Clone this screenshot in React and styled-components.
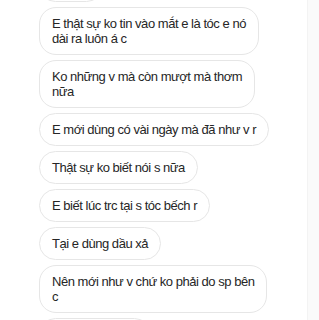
import styled, { createGlobalStyle } from "styled-components";

const GlobalStyle = createGlobalStyle`
  html, body {
    margin: 0;
    padding: 0;
    background: #ffffff;
  }
  body {
    font-family: "Liberation Sans", Arial, sans-serif;
    overflow: hidden;
  }
`;

const Page = styled.div`
  display: grid;
  grid-template-columns: 1fr 12px;
  height: 320px;
  overflow: hidden;
`;

const Thread = styled.div`
  display: flex;
  flex-direction: column;
  align-items: flex-start;
  gap: 5px;
  padding-left: 39px;
  /* the first bubble is scrolled mostly out of view */
  margin-top: -31px;
`;

const Bubble = styled.div`
  box-sizing: border-box;
  padding: 8px 12px;
  border: 1px solid #e6e6e6;
  border-radius: 17px;
  background: #ffffff;
  color: #262626;
  font-size: 13px;
  line-height: 15px;
  letter-spacing: -0.47px;
  white-space: pre-line;
`;

const ScrollStrip = styled.div`
  background: #fafafa;
  border-left: 1px solid #f3f3f3;
`;

const messages = [
  "Dạ c ơi",
  "E thật sự ko tin vào mắt e là tóc e nó\ndài ra luôn á c",
  "Ko những v mà còn mượt mà thơm\nnữa",
  "E mới dùng có vài ngày mà đã như v r",
  "Thật sự ko biết nói s nữa",
  "E biết lúc trc tại s tóc bếch r",
  "Tại e dùng dầu xả",
  "Nên mới như v chứ ko phải do sp bên\nc",
  "Cảm ơn c nhiều",
];

const App = () => {
  return (
    <>
      <GlobalStyle />
      <Page>
        <Thread>
          {messages.map((text, i) => (
            <Bubble key={i}>{text}</Bubble>
          ))}
        </Thread>
        <ScrollStrip />
      </Page>
    </>
  );
};

export default App;
